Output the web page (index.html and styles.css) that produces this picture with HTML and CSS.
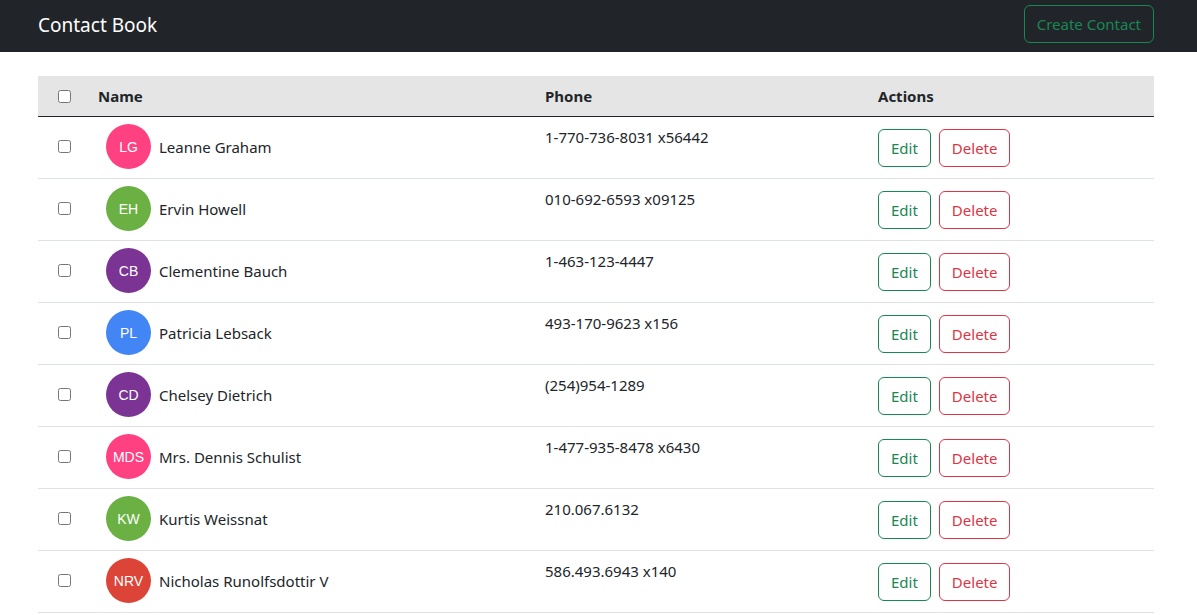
FILE: index.html
```html
<!DOCTYPE html>
<html lang="en">
<head>
<meta charset="utf-8">
<title>Contact Book</title>
<link rel="stylesheet" href="styles.css">
</head>
<body>
<nav class="navbar">
  <span class="brand">Contact Book</span>
  <button class="btn btn-create">Create Contact</button>
</nav>
<main class="content">
  <table class="contacts">
    <colgroup>
      <col class="c-check"><col class="c-name"><col class="c-phone"><col class="c-actions">
    </colgroup>
    <thead>
      <tr>
        <th class="check"><input type="checkbox"></th>
        <th>Name</th>
        <th>Phone</th>
        <th>Actions</th>
      </tr>
    </thead>
    <tbody>
      <tr>
        <td class="check"><input type="checkbox"></td>
        <td class="name"><div class="person"><span class="avatar pink">LG</span><span>Leanne Graham</span></div></td>
        <td class="phone">1-770-736-8031 x56442</td>
        <td class="actions"><div class="btns"><button class="btn btn-edit">Edit</button><button class="btn btn-delete">Delete</button></div></td>
      </tr>
      <tr>
        <td class="check"><input type="checkbox"></td>
        <td class="name"><div class="person"><span class="avatar green">EH</span><span>Ervin Howell</span></div></td>
        <td class="phone">010-692-6593 x09125</td>
        <td class="actions"><div class="btns"><button class="btn btn-edit">Edit</button><button class="btn btn-delete">Delete</button></div></td>
      </tr>
      <tr>
        <td class="check"><input type="checkbox"></td>
        <td class="name"><div class="person"><span class="avatar purple">CB</span><span>Clementine Bauch</span></div></td>
        <td class="phone">1-463-123-4447</td>
        <td class="actions"><div class="btns"><button class="btn btn-edit">Edit</button><button class="btn btn-delete">Delete</button></div></td>
      </tr>
      <tr>
        <td class="check"><input type="checkbox"></td>
        <td class="name"><div class="person"><span class="avatar blue">PL</span><span>Patricia Lebsack</span></div></td>
        <td class="phone">493-170-9623 x156</td>
        <td class="actions"><div class="btns"><button class="btn btn-edit">Edit</button><button class="btn btn-delete">Delete</button></div></td>
      </tr>
      <tr>
        <td class="check"><input type="checkbox"></td>
        <td class="name"><div class="person"><span class="avatar purple">CD</span><span>Chelsey Dietrich</span></div></td>
        <td class="phone">(254)954-1289</td>
        <td class="actions"><div class="btns"><button class="btn btn-edit">Edit</button><button class="btn btn-delete">Delete</button></div></td>
      </tr>
      <tr>
        <td class="check"><input type="checkbox"></td>
        <td class="name"><div class="person"><span class="avatar pink">MDS</span><span>Mrs. Dennis Schulist</span></div></td>
        <td class="phone">1-477-935-8478 x6430</td>
        <td class="actions"><div class="btns"><button class="btn btn-edit">Edit</button><button class="btn btn-delete">Delete</button></div></td>
      </tr>
      <tr>
        <td class="check"><input type="checkbox"></td>
        <td class="name"><div class="person"><span class="avatar green">KW</span><span>Kurtis Weissnat</span></div></td>
        <td class="phone">210.067.6132</td>
        <td class="actions"><div class="btns"><button class="btn btn-edit">Edit</button><button class="btn btn-delete">Delete</button></div></td>
      </tr>
      <tr>
        <td class="check"><input type="checkbox"></td>
        <td class="name"><div class="person"><span class="avatar red">NRV</span><span>Nicholas Runolfsdottir V</span></div></td>
        <td class="phone">586.493.6943 x140</td>
        <td class="actions"><div class="btns"><button class="btn btn-edit">Edit</button><button class="btn btn-delete">Delete</button></div></td>
      </tr>
    </tbody>
  </table>
</main>
</body>
</html>
```

FILE: styles.css
```css
* { box-sizing: border-box; }

html, body {
  margin: 0;
  padding: 0;
}

body {
  font-family: "Noto Sans", "Open Sans", sans-serif;
  font-size: 15px;
  line-height: 24px;
  color: #212529;
  background: #fff;
}

.navbar {
  height: 52px;
  background: #212529;
  display: flex;
  align-items: flex-start;
  justify-content: space-between;
  padding: 0 43px 0 38px;
}

.brand {
  color: #fff;
  font-size: 19px;
  line-height: 30px;
  margin-top: 10px;
}

.btn {
  font-family: inherit;
  font-size: 15px;
  line-height: 24px;
  padding: 6px 12px;
  border-radius: 6px;
  background: transparent;
  border: 1px solid;
  cursor: pointer;
}

.btn-create {
  margin-top: 5px;
  color: #198754;
  border-color: #198754;
}

.content {
  padding: 24px 43px 0 38px;
}

.contacts {
  width: 1116px;
  border-collapse: collapse;
  table-layout: fixed;
}

.c-check { width: 52px; }
.c-name { width: 447px; }
.c-phone { width: 333px; }
.c-actions { width: 284px; }

.contacts th {
  background: #e5e5e5;
  text-align: left;
  font-weight: 700;
  padding: 8px;
  height: 40px;
  border-bottom: 1px solid #212529;
  vertical-align: middle;
}

.contacts td {
  padding: 8px;
  vertical-align: top;
  border-bottom: 1px solid #dee2e6;
}

.contacts .check {
  text-align: center;
  vertical-align: middle;
}

.check input {
  margin: 0;
  width: 13px;
  height: 13px;
  vertical-align: middle;
  position: relative;
  top: -1px;
}

.contacts td.check {
  padding-bottom: 12px;
}

.contacts td.name,
.contacts td.actions {
  vertical-align: middle;
}

.contacts td.name {
  padding-top: 7px;
  padding-bottom: 9px;
}

.person {
  display: flex;
  align-items: center;
  gap: 8px;
  padding-left: 8px;
}

.avatar {
  width: 45px;
  height: 45px;
  border-radius: 50%;
  flex: none;
  display: flex;
  align-items: center;
  justify-content: center;
  color: #fff;
  font-family: "Liberation Sans", Arial, sans-serif;
  font-size: 14px;
}

.pink { background: #ff4081; }
.green { background: #6ab042; }
.purple { background: #7b3394; }
.blue { background: #4285f4; }
.red { background: #db4437; }

.btns {
  display: flex;
  gap: 8px;
}

.btn-edit {
  color: #198754;
  border-color: #198754;
}

.btn-delete {
  color: #dc3545;
  border-color: #dc3545;
}
```
